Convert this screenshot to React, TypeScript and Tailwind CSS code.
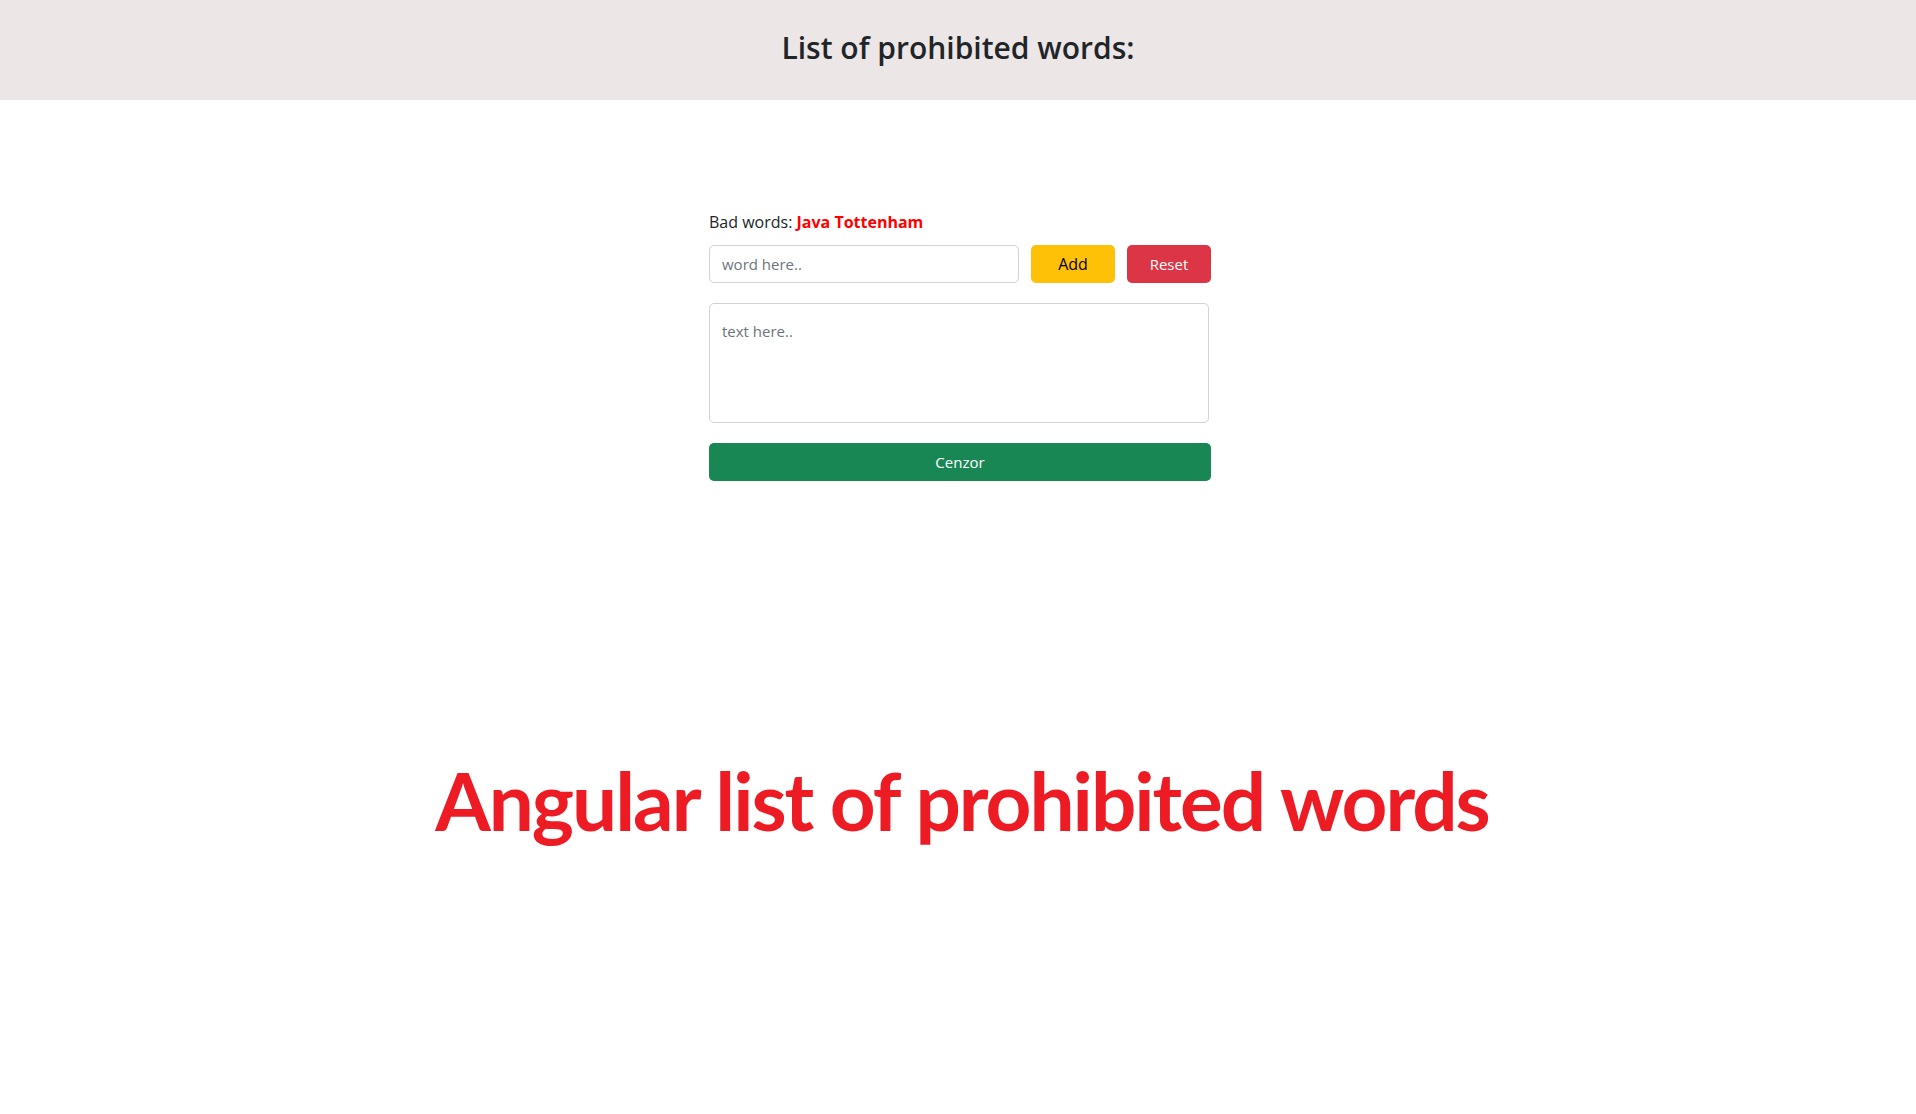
import React from 'react';

export default function App() {
  return (
    <div className="min-h-[1114px] bg-white" style={{ fontFamily: '"Open Sans", "Noto Sans", sans-serif' }}>
      <header className="h-[100px] bg-[#ece6e6] flex items-center justify-center pb-1">
        <h1 className="text-[30px] font-semibold text-[#212529] leading-none">List of prohibited words:</h1>
      </header>

      <div className="flex justify-center pl-1">
        <main className="w-[502px] mt-[110px]">
          <p className="text-[16px] leading-6 text-[#212529]">
            Bad words: <span className="font-bold text-[#ff0000]">Java Tottenham</span>
          </p>
          <div className="mt-[11px] flex items-center gap-3">
            <input
              className="w-[310px] h-[38px] border border-[#ced4da] rounded-[5px] px-3 text-[15px] text-[#212529] placeholder:text-[#6c757d] outline-none"
              placeholder="word here.."
            />
            <button className="w-[84px] h-[38px] rounded-[5px] bg-[#ffc107] text-[16px] text-black">Add</button>
            <button className="w-[84px] h-[38px] rounded-[5px] bg-[#dc3545] text-[15px] text-white">Reset</button>
          </div>
          <textarea
            className="mt-5 block w-[500px] h-[120px] border border-[#ced4da] rounded-[5px] px-3 pt-4 pb-2 text-[15px] text-[#212529] placeholder:text-[#6c757d] outline-none resize-none"
            placeholder="text here.."
          />
          <button className="mt-5 w-full h-[38px] rounded-[5px] bg-[#198754] text-[15px] text-white">Cenzor</button>
        </main>
      </div>

      <div className="mt-[271px] flex justify-center pl-2">
        <h2
          className="text-[80px] font-bold leading-[1.2] tracking-[-2px] text-[#ed1c24]"
          style={{ fontFamily: 'Lato, "Noto Sans", sans-serif' }}
        >
          Angular list of prohibited words
        </h2>
      </div>
    </div>
  );
}
